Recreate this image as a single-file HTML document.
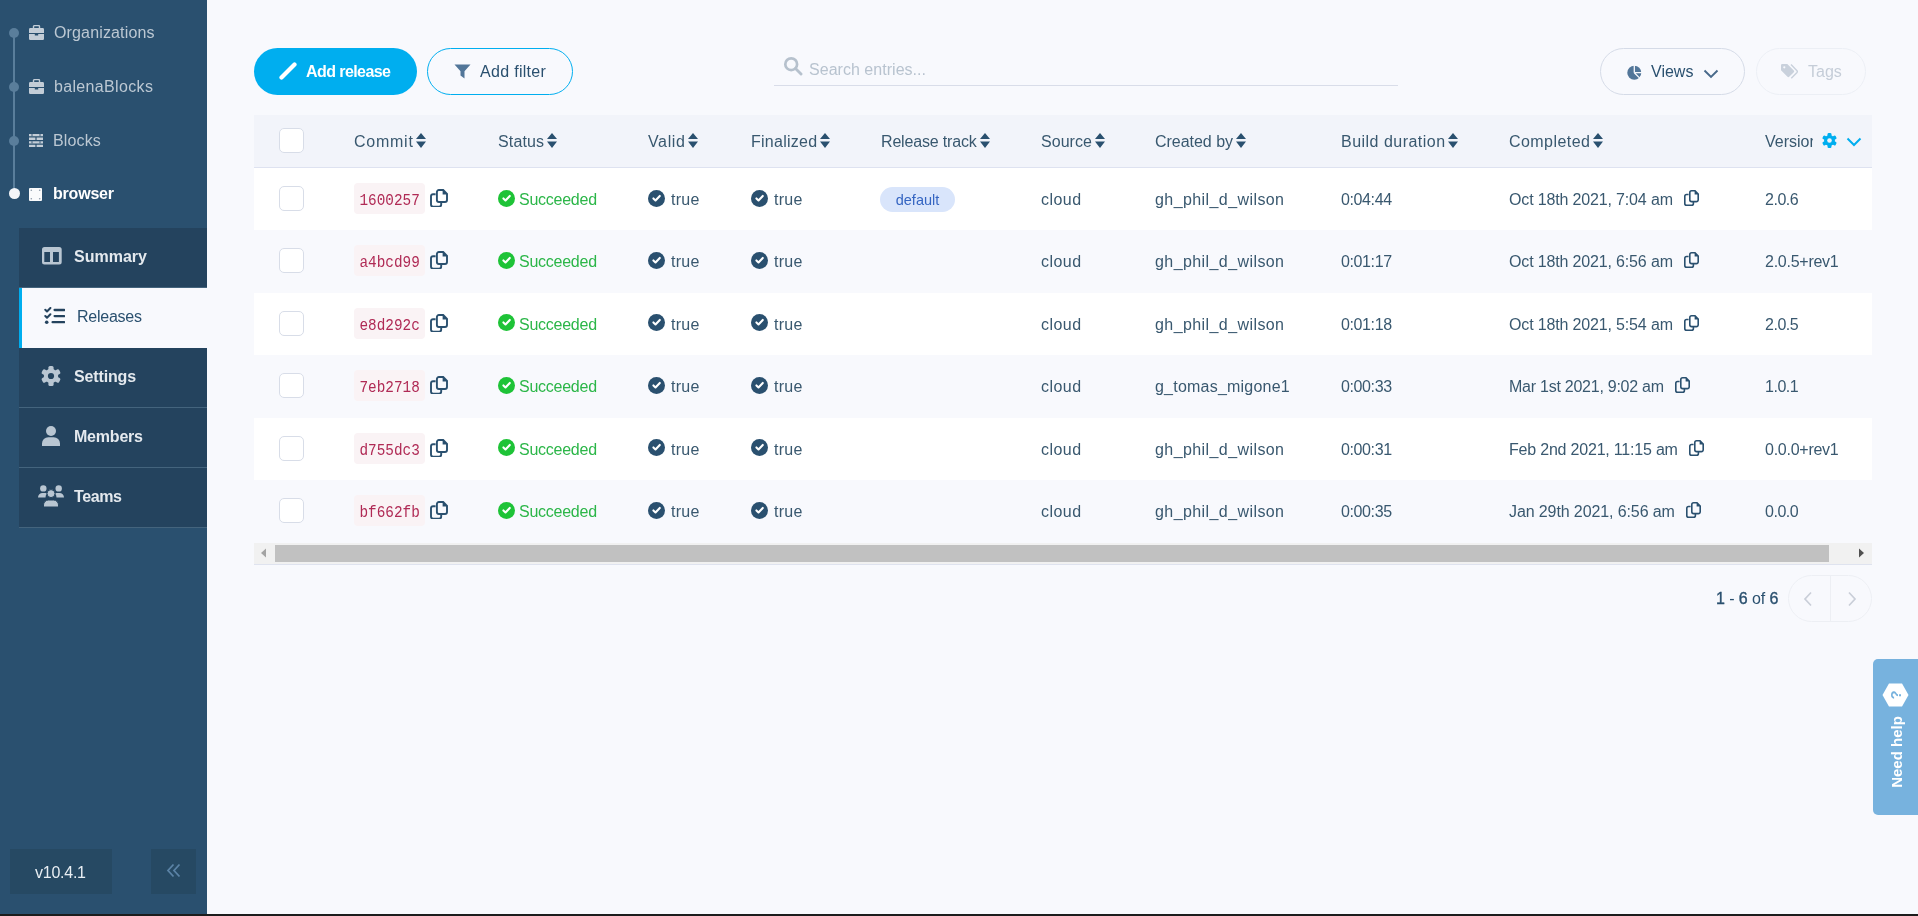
<!DOCTYPE html>
<html><head><meta charset="utf-8">
<style>
*{box-sizing:border-box;margin:0;padding:0}
html,body{width:1918px;height:916px;overflow:hidden;background:#f8f9fd;font-family:"Liberation Sans",sans-serif;font-size:16px;color:#2a506f}
.abs{position:absolute}
.ic{position:absolute;display:block}
.t{position:absolute;white-space:nowrap;line-height:22px}
#sb{position:absolute;left:0;top:0;width:207px;height:914px;background:#2a506f}
#bar{position:absolute;left:0;top:914px;width:1918px;height:2px;background:#1c1c1c}
.bc{position:absolute;color:#bcc8d3;line-height:20px;white-space:nowrap}
.menu{position:absolute;left:19px;width:188px;height:60px;background:#24435e;border-bottom:1px solid #44647d;color:#e4e9ee;font-weight:bold}
.menu.act{background:#f8f9fd;color:#2a506f;font-weight:normal;border-left:3px solid #00aeef;border-bottom:none}
.menu .t{top:18px;left:55px}
.btn{position:absolute;height:47px;border-radius:24px;white-space:nowrap}
.hd{position:absolute;top:115px;left:254px;width:1618px;height:53px;background:#f2f4fa;border-bottom:1px solid #dee2f0}
.row{position:absolute;left:254px;width:1618px;height:62.45px}
.row.w{background:#fff}
.cb{position:absolute;left:25px;width:25px;height:25px;border:1px solid #d8dde8;border-radius:5px;background:#fff}
.row .t,.hd .t{color:#39586f}
.code{position:absolute;left:100px;top:15px;width:71px;height:31px;font-family:"Liberation Mono",monospace;font-size:16.5px;color:#b02a55;background:#faf3f5;border-radius:4px;line-height:35px;padding-left:1px;text-align:center}
.tag{position:absolute;left:626px;top:19px;width:75px;height:25px;border-radius:13px;background:#d9e5fb;color:#3565c2;font-size:14.5px;line-height:27px;text-align:center}
</style></head><body><div id="root" style="position:absolute;left:0;top:0;width:1918px;height:916px;overflow:hidden;will-change:transform">

<div id="sb">
<div class="abs" style="left:13px;top:33px;width:2px;height:160px;background:#5a7e9b"></div>
<div class="abs" style="left:9px;top:28px;width:10px;height:10px;border-radius:50%;background:#5a7e9b"></div>
<div class="abs" style="left:9px;top:82px;width:10px;height:10px;border-radius:50%;background:#5a7e9b"></div>
<div class="abs" style="left:9px;top:136px;width:10px;height:10px;border-radius:50%;background:#5a7e9b"></div>
<div class="abs" style="left:9px;top:188px;width:11px;height:11px;border-radius:50%;background:#f3f5f8"></div>
<svg class="ic" style="left:29px;top:25px" width="15" height="15" viewBox="0 0 15 15"><path d="M4.5 3.2 V1.6 a1 1 0 0 1 1 -1 H9.5 a1 1 0 0 1 1 1 V3.2" fill="none" stroke="#c3cdd7" stroke-width="1.4"/><path d="M0 4.4 a1.3 1.3 0 0 1 1.3 -1.3 H13.7 a1.3 1.3 0 0 1 1.3 1.3 V8 H0Z" fill="#c3cdd7"/><path d="M0 9 H5.8 V10.6 H9.2 V9 H15 V13.8 a1.2 1.2 0 0 1 -1.2 1.2 H1.2 a1.2 1.2 0 0 1 -1.2 -1.2Z" fill="#c3cdd7"/></svg>
<svg class="ic" style="left:29px;top:79px" width="15" height="15" viewBox="0 0 15 15"><path d="M4.5 3.2 V1.6 a1 1 0 0 1 1 -1 H9.5 a1 1 0 0 1 1 1 V3.2" fill="none" stroke="#c3cdd7" stroke-width="1.4"/><path d="M0 4.4 a1.3 1.3 0 0 1 1.3 -1.3 H13.7 a1.3 1.3 0 0 1 1.3 1.3 V8 H0Z" fill="#c3cdd7"/><path d="M0 9 H5.8 V10.6 H9.2 V9 H15 V13.8 a1.2 1.2 0 0 1 -1.2 1.2 H1.2 a1.2 1.2 0 0 1 -1.2 -1.2Z" fill="#c3cdd7"/></svg>
<svg class="ic" style="left:29px;top:134px" width="14" height="13" viewBox="0 0 14 13"><path d="M0 0 H14 V2.2 H0Z M0 3.6 H6.4 V6 H0Z M7.6 3.6 H14 V6 H7.6Z M0 7.2 H14 V9.4 H0Z M0 10.8 H6.4 V13 H0Z M7.6 10.8 H14 V13 H7.6Z" fill="#c3cdd7"/><path d="M3 0 V2.2 M11 0 V2.2 M3 7.2 V9.4 M11 7.2 V9.4" stroke="#2a506f" stroke-width="0.9"/></svg>
<svg class="ic" style="left:29px;top:188px" width="13" height="13" viewBox="0 0 13 13"><rect width="13" height="13" rx="1" fill="#fafbfc"/><circle cx="2.3" cy="2.3" r="0.8" fill="#8c9aa8"/><circle cx="10.7" cy="2.3" r="0.8" fill="#8c9aa8"/><circle cx="2.3" cy="10.7" r="0.8" fill="#8c9aa8"/><circle cx="10.7" cy="10.7" r="0.8" fill="#8c9aa8"/></svg>
<div class="bc" style="top:23px;left:54px;letter-spacing:0.146px;">Organizations</div>
<div class="bc" style="top:77px;left:54px;letter-spacing:0.341px;">balenaBlocks</div>
<div class="bc" style="top:131px;left:53px;letter-spacing:0.150px;">Blocks</div>
<div class="bc" style="top:184px;left:53px;color:#fff;font-weight:bold;letter-spacing:-0.208px;">browser</div>
<div class="menu" style="top:228px"><svg class="ic" style="left:23px;top:19px" width="20" height="18" viewBox="0 0 20 18"><path fill-rule="evenodd" d="M2.5 0 H17.2 A2.5 2.5 0 0 1 19.7 2.5 V15.1 A2.5 2.5 0 0 1 17.2 17.6 H2.5 A2.5 2.5 0 0 1 0 15.1 V2.5 A2.5 2.5 0 0 1 2.5 0Z M2.3 5 V15 H8 V5Z M11 5 V15 H16.9 V5Z" fill="#b9c6d2"/></svg><span class="t" style="letter-spacing:0.000px;">Summary</span></div>
<div class="menu act" style="top:288px"><svg class="ic" style="left:22px;top:19px" width="21" height="18" viewBox="0 0 21 18"><path d="M1.3 2.8 L3 4.5 L6.4 1 M1.3 9 L3 10.7 L6.4 7.2" fill="none" stroke="#24435e" stroke-width="2" stroke-linecap="round" stroke-linejoin="round"/><circle cx="2.7" cy="15.2" r="1.8" fill="#24435e"/><path d="M10.6 3 H20.2 M10.6 9.1 H20.2 M8.6 15.2 H20.2" stroke="#24435e" stroke-width="2.3" stroke-linecap="round"/></svg><span class="t" style="left:55px;letter-spacing:-0.250px;">Releases</span></div>
<div class="menu" style="top:348px"><svg class="ic" style="left:21.4px;top:16.80000000000001px" width="22" height="22" viewBox="0 0 22 22"><circle cx="11.0" cy="11.0" r="7.2" fill="#b9c6d2"/><rect x="8.4" y="1.0" width="5.2" height="10" rx="1.56" fill="#b9c6d2" transform="rotate(0.0 11.0 11.0)"/><rect x="8.4" y="1.0" width="5.2" height="10" rx="1.56" fill="#b9c6d2" transform="rotate(60.0 11.0 11.0)"/><rect x="8.4" y="1.0" width="5.2" height="10" rx="1.56" fill="#b9c6d2" transform="rotate(120.0 11.0 11.0)"/><rect x="8.4" y="1.0" width="5.2" height="10" rx="1.56" fill="#b9c6d2" transform="rotate(180.0 11.0 11.0)"/><rect x="8.4" y="1.0" width="5.2" height="10" rx="1.56" fill="#b9c6d2" transform="rotate(240.0 11.0 11.0)"/><rect x="8.4" y="1.0" width="5.2" height="10" rx="1.56" fill="#b9c6d2" transform="rotate(300.0 11.0 11.0)"/><circle cx="11.0" cy="11.0" r="3.1" fill="#24435e"/></svg><span class="t" style="letter-spacing:-0.143px;">Settings</span></div>
<div class="menu" style="top:408px"><svg class="ic" style="left:23px;top:18px" width="18" height="20" viewBox="0 0 18 20"><circle cx="9" cy="5" r="5" fill="#b9c6d2"/><path d="M0 20 V17.5 A6.3 6.3 0 0 1 6.3 11.2 H11.7 A6.3 6.3 0 0 1 18 17.5 V20Z" fill="#b9c6d2"/></svg><span class="t" style="letter-spacing:-0.208px;">Members</span></div>
<div class="menu" style="top:468px"><svg class="ic" style="left:19px;top:17px" width="26" height="22" viewBox="0 0 26 22"><circle cx="5.3" cy="3.4" r="3.2" fill="#b9c6d2"/><circle cx="20.7" cy="3.4" r="3.2" fill="#b9c6d2"/><path d="M0 12.5 A4.5 4.5 0 0 1 4.5 8 H7.5 A5 5 0 0 1 9 8.5 A6 6 0 0 0 7.5 12.5Z M26 12.5 A4.5 4.5 0 0 0 21.5 8 H18.5 A5 5 0 0 0 17 8.5 A6 6 0 0 1 18.5 12.5Z" fill="#b9c6d2"/><circle cx="13" cy="8.6" r="4" fill="#b9c6d2" stroke="#24435e" stroke-width="1"/><path d="M5.5 22 V20 A5 5 0 0 1 10.5 15 H15.5 A5 5 0 0 1 20.5 20 V22Z" fill="#b9c6d2" stroke="#24435e" stroke-width="1"/></svg><span class="t" style="letter-spacing:-0.375px;">Teams</span></div>
<div class="abs" style="left:10px;top:849px;width:102px;height:45px;background:#264963;color:#e8eef3"><span class="t" style="left:25px;top:13px;letter-spacing:-0.250px;">v10.4.1</span></div>
<div class="abs" style="left:151px;top:849px;width:45px;height:45px;background:#264963"><svg class="ic" style="left:15px;top:14px" width="15" height="15" viewBox="0 0 15 15"><path d="M7.5 1.5 L2 7.5 L7.5 13.5 M13.5 1.5 L8 7.5 L13.5 13.5" fill="none" stroke="#5b83a6" stroke-width="1.8"/></svg></div>
</div><div id="bar"></div>
<div class="btn" style="left:254px;top:48px;width:163px;background:#00aeef;color:#fff;font-weight:bold;letter-spacing:-0.575px;"><svg class="ic" style="left:25px;top:14px" width="18" height="18" viewBox="0 0 18 18"><path d="M2.5 15.5 L15.5 2.5" stroke="#fff" stroke-width="4.2" stroke-linecap="round"/></svg><span class="t" style="left:52px;top:13px">Add release</span></div>
<div class="btn" style="left:427px;top:48px;width:146px;border:1px solid #00aeef;letter-spacing:0.306px;"><svg class="ic" style="left:26px;top:15px" width="17" height="15" viewBox="0 0 17 15"><path d="M0.5 0.5 H16.5 L10.5 7.2 V14.5 L6.5 11.5 V7.2Z" fill="#527699"/></svg><span class="t" style="left:52px;top:12px">Add filter</span></div>
<div class="abs" style="left:774px;top:85px;width:624px;height:1px;background:#d9dde9"></div>
<svg class="ic" style="left:783px;top:56px" width="20" height="20" viewBox="0 0 20 20"><circle cx="8.2" cy="8.2" r="5.9" fill="none" stroke="#b6c1cd" stroke-width="2.7"/><path d="M12.5 12.5 L18 18" stroke="#b6c1cd" stroke-width="2.9" stroke-linecap="round"/></svg>
<div class="t" style="left:809px;top:59px;color:#b8c3cf;letter-spacing:0.031px;">Search entries...</div>
<div class="btn" style="left:1600px;top:48px;width:145px;border:1px solid #d5dbe7"><svg class="ic" style="left:26px;top:16px" width="15" height="15" viewBox="0 0 15 15"><circle cx="7.3" cy="7.7" r="7" fill="#527699"/><path d="M7.3 7.7 V0 M7.3 7.7 H15 M7.3 7.7 L13 13.4" stroke="#f8f9fd" stroke-width="1.3"/></svg><span class="t" style="left:50px;top:12px">Views</span><svg class="ic" style="left:102px;top:20px" width="16" height="10" viewBox="0 0 16 10"><path d="M1.5 1.5 L8 8 L14.5 1.5" fill="none" stroke="#48698a" stroke-width="1.9"/></svg></div>
<div class="btn" style="left:1756px;top:48px;width:110px;border:1px solid #eceff5;color:#c5cdd8"><svg class="ic" style="left:24px;top:15px" width="17" height="15" viewBox="0 0 17 15"><path d="M0 1.2 A1.2 1.2 0 0 1 1.2 0 H6.3 L12.8 6.5 A1.2 1.2 0 0 1 12.8 8.2 L8.2 12.8 A1.2 1.2 0 0 1 6.5 12.8 L0 6.3Z" fill="#c9d1dc"/><circle cx="3.3" cy="3.3" r="1.1" fill="#f8f9fd"/><path d="M10 0.5 L16 6.8 A1.2 1.2 0 0 1 16 8.4 L10.3 14.2" fill="none" stroke="#c9d1dc" stroke-width="1.4"/></svg><span class="t" style="left:51px;top:12px">Tags</span></div>
<div class="hd"><div class="cb" style="top:13px"></div>
<span class="t" style="left:100px;top:16px;letter-spacing:0.750px;">Commit</span>
<svg class="ic" style="left:162px;top:18px" width="10" height="15" viewBox="0 0 10 15"><path d="M5 0 L10 6 L0 6Z M0 8.5 L10 8.5 L5 15Z" fill="#2a506f"/></svg>
<span class="t" style="left:244px;top:16px;letter-spacing:0.150px;">Status</span>
<svg class="ic" style="left:293px;top:18px" width="10" height="15" viewBox="0 0 10 15"><path d="M5 0 L10 6 L0 6Z M0 8.5 L10 8.5 L5 15Z" fill="#2a506f"/></svg>
<span class="t" style="left:394px;top:16px;letter-spacing:0.625px;">Valid</span>
<svg class="ic" style="left:434px;top:18px" width="10" height="15" viewBox="0 0 10 15"><path d="M5 0 L10 6 L0 6Z M0 8.5 L10 8.5 L5 15Z" fill="#2a506f"/></svg>
<span class="t" style="left:497px;top:16px;letter-spacing:0.250px;">Finalized</span>
<svg class="ic" style="left:566px;top:18px" width="10" height="15" viewBox="0 0 10 15"><path d="M5 0 L10 6 L0 6Z M0 8.5 L10 8.5 L5 15Z" fill="#2a506f"/></svg>
<span class="t" style="left:627px;top:16px;letter-spacing:-0.167px;">Release track</span>
<svg class="ic" style="left:726px;top:18px" width="10" height="15" viewBox="0 0 10 15"><path d="M5 0 L10 6 L0 6Z M0 8.5 L10 8.5 L5 15Z" fill="#2a506f"/></svg>
<span class="t" style="left:787px;top:16px;letter-spacing:0.050px;">Source</span>
<svg class="ic" style="left:841px;top:18px" width="10" height="15" viewBox="0 0 10 15"><path d="M5 0 L10 6 L0 6Z M0 8.5 L10 8.5 L5 15Z" fill="#2a506f"/></svg>
<span class="t" style="left:901px;top:16px;letter-spacing:-0.028px;">Created by</span>
<svg class="ic" style="left:982px;top:18px" width="10" height="15" viewBox="0 0 10 15"><path d="M5 0 L10 6 L0 6Z M0 8.5 L10 8.5 L5 15Z" fill="#2a506f"/></svg>
<span class="t" style="left:1087px;top:16px;letter-spacing:0.481px;">Build duration</span>
<svg class="ic" style="left:1194px;top:18px" width="10" height="15" viewBox="0 0 10 15"><path d="M5 0 L10 6 L0 6Z M0 8.5 L10 8.5 L5 15Z" fill="#2a506f"/></svg>
<span class="t" style="left:1255px;top:16px;letter-spacing:0.438px;">Completed</span>
<svg class="ic" style="left:1339px;top:18px" width="10" height="15" viewBox="0 0 10 15"><path d="M5 0 L10 6 L0 6Z M0 8.5 L10 8.5 L5 15Z" fill="#2a506f"/></svg>
<div class="abs" style="left:1511px;top:0;width:48px;height:52px;overflow:hidden"><span class="t" style="left:0;top:16px">Version</span></div>
<svg class="ic" style="left:1566.9px;top:17.0px" width="17" height="17" viewBox="0 0 17 17"><circle cx="8.5" cy="8.5" r="5.4" fill="#00aeef"/><rect x="6.55" y="1.0" width="3.9" height="7.5" rx="1.17" fill="#00aeef" transform="rotate(0.0 8.5 8.5)"/><rect x="6.55" y="1.0" width="3.9" height="7.5" rx="1.17" fill="#00aeef" transform="rotate(60.0 8.5 8.5)"/><rect x="6.55" y="1.0" width="3.9" height="7.5" rx="1.17" fill="#00aeef" transform="rotate(120.0 8.5 8.5)"/><rect x="6.55" y="1.0" width="3.9" height="7.5" rx="1.17" fill="#00aeef" transform="rotate(180.0 8.5 8.5)"/><rect x="6.55" y="1.0" width="3.9" height="7.5" rx="1.17" fill="#00aeef" transform="rotate(240.0 8.5 8.5)"/><rect x="6.55" y="1.0" width="3.9" height="7.5" rx="1.17" fill="#00aeef" transform="rotate(300.0 8.5 8.5)"/><circle cx="8.5" cy="8.5" r="2.3" fill="#f2f4fa"/></svg>
<svg class="ic" style="left:1592px;top:22px" width="16" height="10" viewBox="0 0 16 10"><path d="M1.5 1.5 L8 8 L14.5 1.5" fill="none" stroke="#00aeef" stroke-width="2"/></svg>
</div>
<div class="row w" style="top:168.0px">
<div class="cb" style="top:18px"></div>
<div class="code"><span style="display:inline-block;transform:scaleX(0.87);transform-origin:center">1600257</span></div>
<svg class="ic" style="left:176px;top:21px" width="18" height="18" viewBox="0 0 18 18"><path d="M5.6 5.2 H3 a2 2 0 0 0 -2 2 V15.6 a2 2 0 0 0 2 2 H9.2 a2 2 0 0 0 2 -2 V13.9" fill="none" stroke="#2a506f" stroke-width="1.9"/><path d="M8.9 1 H13.2 L17 4.8 V11 a2 2 0 0 1 -2 2 H8.9 a2 2 0 0 1 -2 -2 V3 a2 2 0 0 1 2 -2Z" fill="none" stroke="#2a506f" stroke-width="1.9"/><path d="M12.6 0.5 V5.4 H17.5Z" fill="#2a506f"/></svg>
<svg class="ic" style="left:244px;top:21.5px" width="17" height="17" viewBox="0 0 17 17"><circle cx="8.5" cy="8.5" r="8.5" fill="#1ec337"/><path d="M5.4 8.4 L7.5 10.4 L11.8 5.9" fill="none" stroke="#fff" stroke-width="2.1" stroke-linecap="round" stroke-linejoin="round"/></svg>
<span class="t" style="left:265px;top:21px;color:#2bb648;letter-spacing:-0.250px;">Succeeded</span>
<svg class="ic" style="left:394px;top:21.6px" width="17" height="17" viewBox="0 0 17 17"><circle cx="8.5" cy="8.5" r="8.5" fill="#2a506f"/><path d="M5.4 8.4 L7.5 10.4 L11.8 5.9" fill="none" stroke="#fff" stroke-width="2.1" stroke-linecap="round" stroke-linejoin="round"/></svg>
<span class="t" style="left:417px;top:21px;letter-spacing:0.267px;">true</span>
<svg class="ic" style="left:497px;top:21.6px" width="17" height="17" viewBox="0 0 17 17"><circle cx="8.5" cy="8.5" r="8.5" fill="#2a506f"/><path d="M5.4 8.4 L7.5 10.4 L11.8 5.9" fill="none" stroke="#fff" stroke-width="2.1" stroke-linecap="round" stroke-linejoin="round"/></svg>
<span class="t" style="left:520px;top:21px;letter-spacing:0.267px;">true</span>
<div class="tag">default</div>
<span class="t" style="left:787px;top:21px;letter-spacing:0.463px;">cloud</span>
<span class="t" style="left:901px;top:21px;letter-spacing:0.417px;">gh_phil_d_wilson</span>
<span class="t" style="left:1087px;top:21px;letter-spacing:-0.383px;">0:04:44</span>
<span class="t" style="left:1255px;top:21px;letter-spacing:-0.155px;">Oct 18th 2021, 7:04 am</span>
<span class="t" style="left:1511px;top:21px;letter-spacing:-0.475px;">2.0.6</span>
<svg class="ic" style="left:1430px;top:22px" width="15" height="16" viewBox="0 0 15 16"><path d="M4.6 4.5 H2.6 a1.8 1.8 0 0 0 -1.8 1.8 V13.4 a1.8 1.8 0 0 0 1.8 1.8 H7.6 a1.8 1.8 0 0 0 1.8 -1.8 V12" fill="none" stroke="#2a506f" stroke-width="1.6"/><path d="M7.6 0.8 H11 L14.2 4 V9.8 a1.8 1.8 0 0 1 -1.8 1.8 H7.6 a1.8 1.8 0 0 1 -1.8 -1.8 V2.6 a1.8 1.8 0 0 1 1.8 -1.8Z" fill="none" stroke="#2a506f" stroke-width="1.6"/><path d="M10.6 0.3 V4.4 H14.7Z" fill="#2a506f"/></svg>
</div>
<div class="row" style="top:230.45px">
<div class="cb" style="top:18px"></div>
<div class="code"><span style="display:inline-block;transform:scaleX(0.87);transform-origin:center">a4bcd99</span></div>
<svg class="ic" style="left:176px;top:21px" width="18" height="18" viewBox="0 0 18 18"><path d="M5.6 5.2 H3 a2 2 0 0 0 -2 2 V15.6 a2 2 0 0 0 2 2 H9.2 a2 2 0 0 0 2 -2 V13.9" fill="none" stroke="#2a506f" stroke-width="1.9"/><path d="M8.9 1 H13.2 L17 4.8 V11 a2 2 0 0 1 -2 2 H8.9 a2 2 0 0 1 -2 -2 V3 a2 2 0 0 1 2 -2Z" fill="none" stroke="#2a506f" stroke-width="1.9"/><path d="M12.6 0.5 V5.4 H17.5Z" fill="#2a506f"/></svg>
<svg class="ic" style="left:244px;top:21.5px" width="17" height="17" viewBox="0 0 17 17"><circle cx="8.5" cy="8.5" r="8.5" fill="#1ec337"/><path d="M5.4 8.4 L7.5 10.4 L11.8 5.9" fill="none" stroke="#fff" stroke-width="2.1" stroke-linecap="round" stroke-linejoin="round"/></svg>
<span class="t" style="left:265px;top:21px;color:#2bb648;letter-spacing:-0.250px;">Succeeded</span>
<svg class="ic" style="left:394px;top:21.6px" width="17" height="17" viewBox="0 0 17 17"><circle cx="8.5" cy="8.5" r="8.5" fill="#2a506f"/><path d="M5.4 8.4 L7.5 10.4 L11.8 5.9" fill="none" stroke="#fff" stroke-width="2.1" stroke-linecap="round" stroke-linejoin="round"/></svg>
<span class="t" style="left:417px;top:21px;letter-spacing:0.267px;">true</span>
<svg class="ic" style="left:497px;top:21.6px" width="17" height="17" viewBox="0 0 17 17"><circle cx="8.5" cy="8.5" r="8.5" fill="#2a506f"/><path d="M5.4 8.4 L7.5 10.4 L11.8 5.9" fill="none" stroke="#fff" stroke-width="2.1" stroke-linecap="round" stroke-linejoin="round"/></svg>
<span class="t" style="left:520px;top:21px;letter-spacing:0.267px;">true</span>
<span class="t" style="left:787px;top:21px;letter-spacing:0.463px;">cloud</span>
<span class="t" style="left:901px;top:21px;letter-spacing:0.417px;">gh_phil_d_wilson</span>
<span class="t" style="left:1087px;top:21px;letter-spacing:-0.383px;">0:01:17</span>
<span class="t" style="left:1255px;top:21px;letter-spacing:-0.155px;">Oct 18th 2021, 6:56 am</span>
<span class="t" style="left:1511px;top:21px;letter-spacing:-0.256px;">2.0.5+rev1</span>
<svg class="ic" style="left:1430px;top:22px" width="15" height="16" viewBox="0 0 15 16"><path d="M4.6 4.5 H2.6 a1.8 1.8 0 0 0 -1.8 1.8 V13.4 a1.8 1.8 0 0 0 1.8 1.8 H7.6 a1.8 1.8 0 0 0 1.8 -1.8 V12" fill="none" stroke="#2a506f" stroke-width="1.6"/><path d="M7.6 0.8 H11 L14.2 4 V9.8 a1.8 1.8 0 0 1 -1.8 1.8 H7.6 a1.8 1.8 0 0 1 -1.8 -1.8 V2.6 a1.8 1.8 0 0 1 1.8 -1.8Z" fill="none" stroke="#2a506f" stroke-width="1.6"/><path d="M10.6 0.3 V4.4 H14.7Z" fill="#2a506f"/></svg>
</div>
<div class="row w" style="top:292.9px">
<div class="cb" style="top:18px"></div>
<div class="code"><span style="display:inline-block;transform:scaleX(0.87);transform-origin:center">e8d292c</span></div>
<svg class="ic" style="left:176px;top:21px" width="18" height="18" viewBox="0 0 18 18"><path d="M5.6 5.2 H3 a2 2 0 0 0 -2 2 V15.6 a2 2 0 0 0 2 2 H9.2 a2 2 0 0 0 2 -2 V13.9" fill="none" stroke="#2a506f" stroke-width="1.9"/><path d="M8.9 1 H13.2 L17 4.8 V11 a2 2 0 0 1 -2 2 H8.9 a2 2 0 0 1 -2 -2 V3 a2 2 0 0 1 2 -2Z" fill="none" stroke="#2a506f" stroke-width="1.9"/><path d="M12.6 0.5 V5.4 H17.5Z" fill="#2a506f"/></svg>
<svg class="ic" style="left:244px;top:21.5px" width="17" height="17" viewBox="0 0 17 17"><circle cx="8.5" cy="8.5" r="8.5" fill="#1ec337"/><path d="M5.4 8.4 L7.5 10.4 L11.8 5.9" fill="none" stroke="#fff" stroke-width="2.1" stroke-linecap="round" stroke-linejoin="round"/></svg>
<span class="t" style="left:265px;top:21px;color:#2bb648;letter-spacing:-0.250px;">Succeeded</span>
<svg class="ic" style="left:394px;top:21.6px" width="17" height="17" viewBox="0 0 17 17"><circle cx="8.5" cy="8.5" r="8.5" fill="#2a506f"/><path d="M5.4 8.4 L7.5 10.4 L11.8 5.9" fill="none" stroke="#fff" stroke-width="2.1" stroke-linecap="round" stroke-linejoin="round"/></svg>
<span class="t" style="left:417px;top:21px;letter-spacing:0.267px;">true</span>
<svg class="ic" style="left:497px;top:21.6px" width="17" height="17" viewBox="0 0 17 17"><circle cx="8.5" cy="8.5" r="8.5" fill="#2a506f"/><path d="M5.4 8.4 L7.5 10.4 L11.8 5.9" fill="none" stroke="#fff" stroke-width="2.1" stroke-linecap="round" stroke-linejoin="round"/></svg>
<span class="t" style="left:520px;top:21px;letter-spacing:0.267px;">true</span>
<span class="t" style="left:787px;top:21px;letter-spacing:0.463px;">cloud</span>
<span class="t" style="left:901px;top:21px;letter-spacing:0.417px;">gh_phil_d_wilson</span>
<span class="t" style="left:1087px;top:21px;letter-spacing:-0.383px;">0:01:18</span>
<span class="t" style="left:1255px;top:21px;letter-spacing:-0.155px;">Oct 18th 2021, 5:54 am</span>
<span class="t" style="left:1511px;top:21px;letter-spacing:-0.475px;">2.0.5</span>
<svg class="ic" style="left:1430px;top:22px" width="15" height="16" viewBox="0 0 15 16"><path d="M4.6 4.5 H2.6 a1.8 1.8 0 0 0 -1.8 1.8 V13.4 a1.8 1.8 0 0 0 1.8 1.8 H7.6 a1.8 1.8 0 0 0 1.8 -1.8 V12" fill="none" stroke="#2a506f" stroke-width="1.6"/><path d="M7.6 0.8 H11 L14.2 4 V9.8 a1.8 1.8 0 0 1 -1.8 1.8 H7.6 a1.8 1.8 0 0 1 -1.8 -1.8 V2.6 a1.8 1.8 0 0 1 1.8 -1.8Z" fill="none" stroke="#2a506f" stroke-width="1.6"/><path d="M10.6 0.3 V4.4 H14.7Z" fill="#2a506f"/></svg>
</div>
<div class="row" style="top:355.35px">
<div class="cb" style="top:18px"></div>
<div class="code"><span style="display:inline-block;transform:scaleX(0.87);transform-origin:center">7eb2718</span></div>
<svg class="ic" style="left:176px;top:21px" width="18" height="18" viewBox="0 0 18 18"><path d="M5.6 5.2 H3 a2 2 0 0 0 -2 2 V15.6 a2 2 0 0 0 2 2 H9.2 a2 2 0 0 0 2 -2 V13.9" fill="none" stroke="#2a506f" stroke-width="1.9"/><path d="M8.9 1 H13.2 L17 4.8 V11 a2 2 0 0 1 -2 2 H8.9 a2 2 0 0 1 -2 -2 V3 a2 2 0 0 1 2 -2Z" fill="none" stroke="#2a506f" stroke-width="1.9"/><path d="M12.6 0.5 V5.4 H17.5Z" fill="#2a506f"/></svg>
<svg class="ic" style="left:244px;top:21.5px" width="17" height="17" viewBox="0 0 17 17"><circle cx="8.5" cy="8.5" r="8.5" fill="#1ec337"/><path d="M5.4 8.4 L7.5 10.4 L11.8 5.9" fill="none" stroke="#fff" stroke-width="2.1" stroke-linecap="round" stroke-linejoin="round"/></svg>
<span class="t" style="left:265px;top:21px;color:#2bb648;letter-spacing:-0.250px;">Succeeded</span>
<svg class="ic" style="left:394px;top:21.6px" width="17" height="17" viewBox="0 0 17 17"><circle cx="8.5" cy="8.5" r="8.5" fill="#2a506f"/><path d="M5.4 8.4 L7.5 10.4 L11.8 5.9" fill="none" stroke="#fff" stroke-width="2.1" stroke-linecap="round" stroke-linejoin="round"/></svg>
<span class="t" style="left:417px;top:21px;letter-spacing:0.267px;">true</span>
<svg class="ic" style="left:497px;top:21.6px" width="17" height="17" viewBox="0 0 17 17"><circle cx="8.5" cy="8.5" r="8.5" fill="#2a506f"/><path d="M5.4 8.4 L7.5 10.4 L11.8 5.9" fill="none" stroke="#fff" stroke-width="2.1" stroke-linecap="round" stroke-linejoin="round"/></svg>
<span class="t" style="left:520px;top:21px;letter-spacing:0.267px;">true</span>
<span class="t" style="left:787px;top:21px;letter-spacing:0.463px;">cloud</span>
<span class="t" style="left:901px;top:21px;letter-spacing:0.218px;">g_tomas_migone1</span>
<span class="t" style="left:1087px;top:21px;letter-spacing:-0.383px;">0:00:33</span>
<span class="t" style="left:1255px;top:21px;letter-spacing:-0.250px;">Mar 1st 2021, 9:02 am</span>
<span class="t" style="left:1511px;top:21px;letter-spacing:-0.475px;">1.0.1</span>
<svg class="ic" style="left:1421px;top:22px" width="15" height="16" viewBox="0 0 15 16"><path d="M4.6 4.5 H2.6 a1.8 1.8 0 0 0 -1.8 1.8 V13.4 a1.8 1.8 0 0 0 1.8 1.8 H7.6 a1.8 1.8 0 0 0 1.8 -1.8 V12" fill="none" stroke="#2a506f" stroke-width="1.6"/><path d="M7.6 0.8 H11 L14.2 4 V9.8 a1.8 1.8 0 0 1 -1.8 1.8 H7.6 a1.8 1.8 0 0 1 -1.8 -1.8 V2.6 a1.8 1.8 0 0 1 1.8 -1.8Z" fill="none" stroke="#2a506f" stroke-width="1.6"/><path d="M10.6 0.3 V4.4 H14.7Z" fill="#2a506f"/></svg>
</div>
<div class="row w" style="top:417.8px">
<div class="cb" style="top:18px"></div>
<div class="code"><span style="display:inline-block;transform:scaleX(0.87);transform-origin:center">d755dc3</span></div>
<svg class="ic" style="left:176px;top:21px" width="18" height="18" viewBox="0 0 18 18"><path d="M5.6 5.2 H3 a2 2 0 0 0 -2 2 V15.6 a2 2 0 0 0 2 2 H9.2 a2 2 0 0 0 2 -2 V13.9" fill="none" stroke="#2a506f" stroke-width="1.9"/><path d="M8.9 1 H13.2 L17 4.8 V11 a2 2 0 0 1 -2 2 H8.9 a2 2 0 0 1 -2 -2 V3 a2 2 0 0 1 2 -2Z" fill="none" stroke="#2a506f" stroke-width="1.9"/><path d="M12.6 0.5 V5.4 H17.5Z" fill="#2a506f"/></svg>
<svg class="ic" style="left:244px;top:21.5px" width="17" height="17" viewBox="0 0 17 17"><circle cx="8.5" cy="8.5" r="8.5" fill="#1ec337"/><path d="M5.4 8.4 L7.5 10.4 L11.8 5.9" fill="none" stroke="#fff" stroke-width="2.1" stroke-linecap="round" stroke-linejoin="round"/></svg>
<span class="t" style="left:265px;top:21px;color:#2bb648;letter-spacing:-0.250px;">Succeeded</span>
<svg class="ic" style="left:394px;top:21.6px" width="17" height="17" viewBox="0 0 17 17"><circle cx="8.5" cy="8.5" r="8.5" fill="#2a506f"/><path d="M5.4 8.4 L7.5 10.4 L11.8 5.9" fill="none" stroke="#fff" stroke-width="2.1" stroke-linecap="round" stroke-linejoin="round"/></svg>
<span class="t" style="left:417px;top:21px;letter-spacing:0.267px;">true</span>
<svg class="ic" style="left:497px;top:21.6px" width="17" height="17" viewBox="0 0 17 17"><circle cx="8.5" cy="8.5" r="8.5" fill="#2a506f"/><path d="M5.4 8.4 L7.5 10.4 L11.8 5.9" fill="none" stroke="#fff" stroke-width="2.1" stroke-linecap="round" stroke-linejoin="round"/></svg>
<span class="t" style="left:520px;top:21px;letter-spacing:0.267px;">true</span>
<span class="t" style="left:787px;top:21px;letter-spacing:0.463px;">cloud</span>
<span class="t" style="left:901px;top:21px;letter-spacing:0.417px;">gh_phil_d_wilson</span>
<span class="t" style="left:1087px;top:21px;letter-spacing:-0.383px;">0:00:31</span>
<span class="t" style="left:1255px;top:21px;letter-spacing:-0.202px;">Feb 2nd 2021, 11:15 am</span>
<span class="t" style="left:1511px;top:21px;letter-spacing:-0.256px;">0.0.0+rev1</span>
<svg class="ic" style="left:1435px;top:22px" width="15" height="16" viewBox="0 0 15 16"><path d="M4.6 4.5 H2.6 a1.8 1.8 0 0 0 -1.8 1.8 V13.4 a1.8 1.8 0 0 0 1.8 1.8 H7.6 a1.8 1.8 0 0 0 1.8 -1.8 V12" fill="none" stroke="#2a506f" stroke-width="1.6"/><path d="M7.6 0.8 H11 L14.2 4 V9.8 a1.8 1.8 0 0 1 -1.8 1.8 H7.6 a1.8 1.8 0 0 1 -1.8 -1.8 V2.6 a1.8 1.8 0 0 1 1.8 -1.8Z" fill="none" stroke="#2a506f" stroke-width="1.6"/><path d="M10.6 0.3 V4.4 H14.7Z" fill="#2a506f"/></svg>
</div>
<div class="row" style="top:480.25px">
<div class="cb" style="top:18px"></div>
<div class="code"><span style="display:inline-block;transform:scaleX(0.87);transform-origin:center">bf662fb</span></div>
<svg class="ic" style="left:176px;top:21px" width="18" height="18" viewBox="0 0 18 18"><path d="M5.6 5.2 H3 a2 2 0 0 0 -2 2 V15.6 a2 2 0 0 0 2 2 H9.2 a2 2 0 0 0 2 -2 V13.9" fill="none" stroke="#2a506f" stroke-width="1.9"/><path d="M8.9 1 H13.2 L17 4.8 V11 a2 2 0 0 1 -2 2 H8.9 a2 2 0 0 1 -2 -2 V3 a2 2 0 0 1 2 -2Z" fill="none" stroke="#2a506f" stroke-width="1.9"/><path d="M12.6 0.5 V5.4 H17.5Z" fill="#2a506f"/></svg>
<svg class="ic" style="left:244px;top:21.5px" width="17" height="17" viewBox="0 0 17 17"><circle cx="8.5" cy="8.5" r="8.5" fill="#1ec337"/><path d="M5.4 8.4 L7.5 10.4 L11.8 5.9" fill="none" stroke="#fff" stroke-width="2.1" stroke-linecap="round" stroke-linejoin="round"/></svg>
<span class="t" style="left:265px;top:21px;color:#2bb648;letter-spacing:-0.250px;">Succeeded</span>
<svg class="ic" style="left:394px;top:21.6px" width="17" height="17" viewBox="0 0 17 17"><circle cx="8.5" cy="8.5" r="8.5" fill="#2a506f"/><path d="M5.4 8.4 L7.5 10.4 L11.8 5.9" fill="none" stroke="#fff" stroke-width="2.1" stroke-linecap="round" stroke-linejoin="round"/></svg>
<span class="t" style="left:417px;top:21px;letter-spacing:0.267px;">true</span>
<svg class="ic" style="left:497px;top:21.6px" width="17" height="17" viewBox="0 0 17 17"><circle cx="8.5" cy="8.5" r="8.5" fill="#2a506f"/><path d="M5.4 8.4 L7.5 10.4 L11.8 5.9" fill="none" stroke="#fff" stroke-width="2.1" stroke-linecap="round" stroke-linejoin="round"/></svg>
<span class="t" style="left:520px;top:21px;letter-spacing:0.267px;">true</span>
<span class="t" style="left:787px;top:21px;letter-spacing:0.463px;">cloud</span>
<span class="t" style="left:901px;top:21px;letter-spacing:0.417px;">gh_phil_d_wilson</span>
<span class="t" style="left:1087px;top:21px;letter-spacing:-0.383px;">0:00:35</span>
<span class="t" style="left:1255px;top:21px;letter-spacing:-0.107px;">Jan 29th 2021, 6:56 am</span>
<span class="t" style="left:1511px;top:21px;letter-spacing:-0.475px;">0.0.0</span>
<svg class="ic" style="left:1432px;top:22px" width="15" height="16" viewBox="0 0 15 16"><path d="M4.6 4.5 H2.6 a1.8 1.8 0 0 0 -1.8 1.8 V13.4 a1.8 1.8 0 0 0 1.8 1.8 H7.6 a1.8 1.8 0 0 0 1.8 -1.8 V12" fill="none" stroke="#2a506f" stroke-width="1.6"/><path d="M7.6 0.8 H11 L14.2 4 V9.8 a1.8 1.8 0 0 1 -1.8 1.8 H7.6 a1.8 1.8 0 0 1 -1.8 -1.8 V2.6 a1.8 1.8 0 0 1 1.8 -1.8Z" fill="none" stroke="#2a506f" stroke-width="1.6"/><path d="M10.6 0.3 V4.4 H14.7Z" fill="#2a506f"/></svg>
</div>
<div class="abs" style="left:254px;top:543px;width:1618px;height:22px;background:#f1f1f1;border-bottom:1px solid #dfe3ef"><div class="abs" style="left:21px;top:2px;width:1554px;height:17px;background:#c1c1c1"></div><svg class="ic" style="left:6px;top:5px" width="8" height="10" viewBox="0 0 8 10"><path d="M6 0.5 V9.5 L1 5Z" fill="#a3a3a3"/></svg><svg class="ic" style="left:1603px;top:5px" width="8" height="10" viewBox="0 0 8 10"><path d="M2 0.5 V9.5 L7 5Z" fill="#505050"/></svg></div>
<span class="t" style="left:1716px;top:588px;letter-spacing:-0.1px"><span style="-webkit-text-stroke:0.35px #2a506f">1</span> - <span style="-webkit-text-stroke:0.35px #2a506f">6</span> of <span style="-webkit-text-stroke:0.35px #2a506f">6</span></span>
<div class="abs" style="left:1788px;top:575px;width:84px;height:47px;border:1px solid #edeff4;border-radius:24px"><div class="abs" style="left:41px;top:0;width:1px;height:45px;background:#edeff4"></div><svg class="ic" style="left:14px;top:15px" width="10" height="16" viewBox="0 0 10 16"><path d="M8 1.5 L2 8 L8 14.5" fill="none" stroke="#c9ced8" stroke-width="1.7"/></svg><svg class="ic" style="left:58px;top:15px" width="10" height="16" viewBox="0 0 10 16"><path d="M2 1.5 L8 8 L2 14.5" fill="none" stroke="#c9ced8" stroke-width="1.7"/></svg></div>
<div class="abs" style="left:1873px;top:659px;width:50px;height:156px;background:#77b2de;border-radius:5px"><svg class="ic" style="left:9px;top:24px" width="27" height="24" viewBox="0 0 27 24"><path d="M7 0.5 H20 L26.5 12 L20 23.5 H7 L0.5 12Z" fill="#fff"/><text x="13.5" y="17" font-family="Liberation Sans" font-weight="bold" font-size="15" fill="#77b2de" text-anchor="middle" transform="rotate(-90 13.5 12)">?</text></svg><span class="t" style="left:-12px;top:82px;color:#fff;font-weight:bold;font-size:15px;transform:rotate(-90deg);transform-origin:center">Need help</span></div>
</div></body></html>
